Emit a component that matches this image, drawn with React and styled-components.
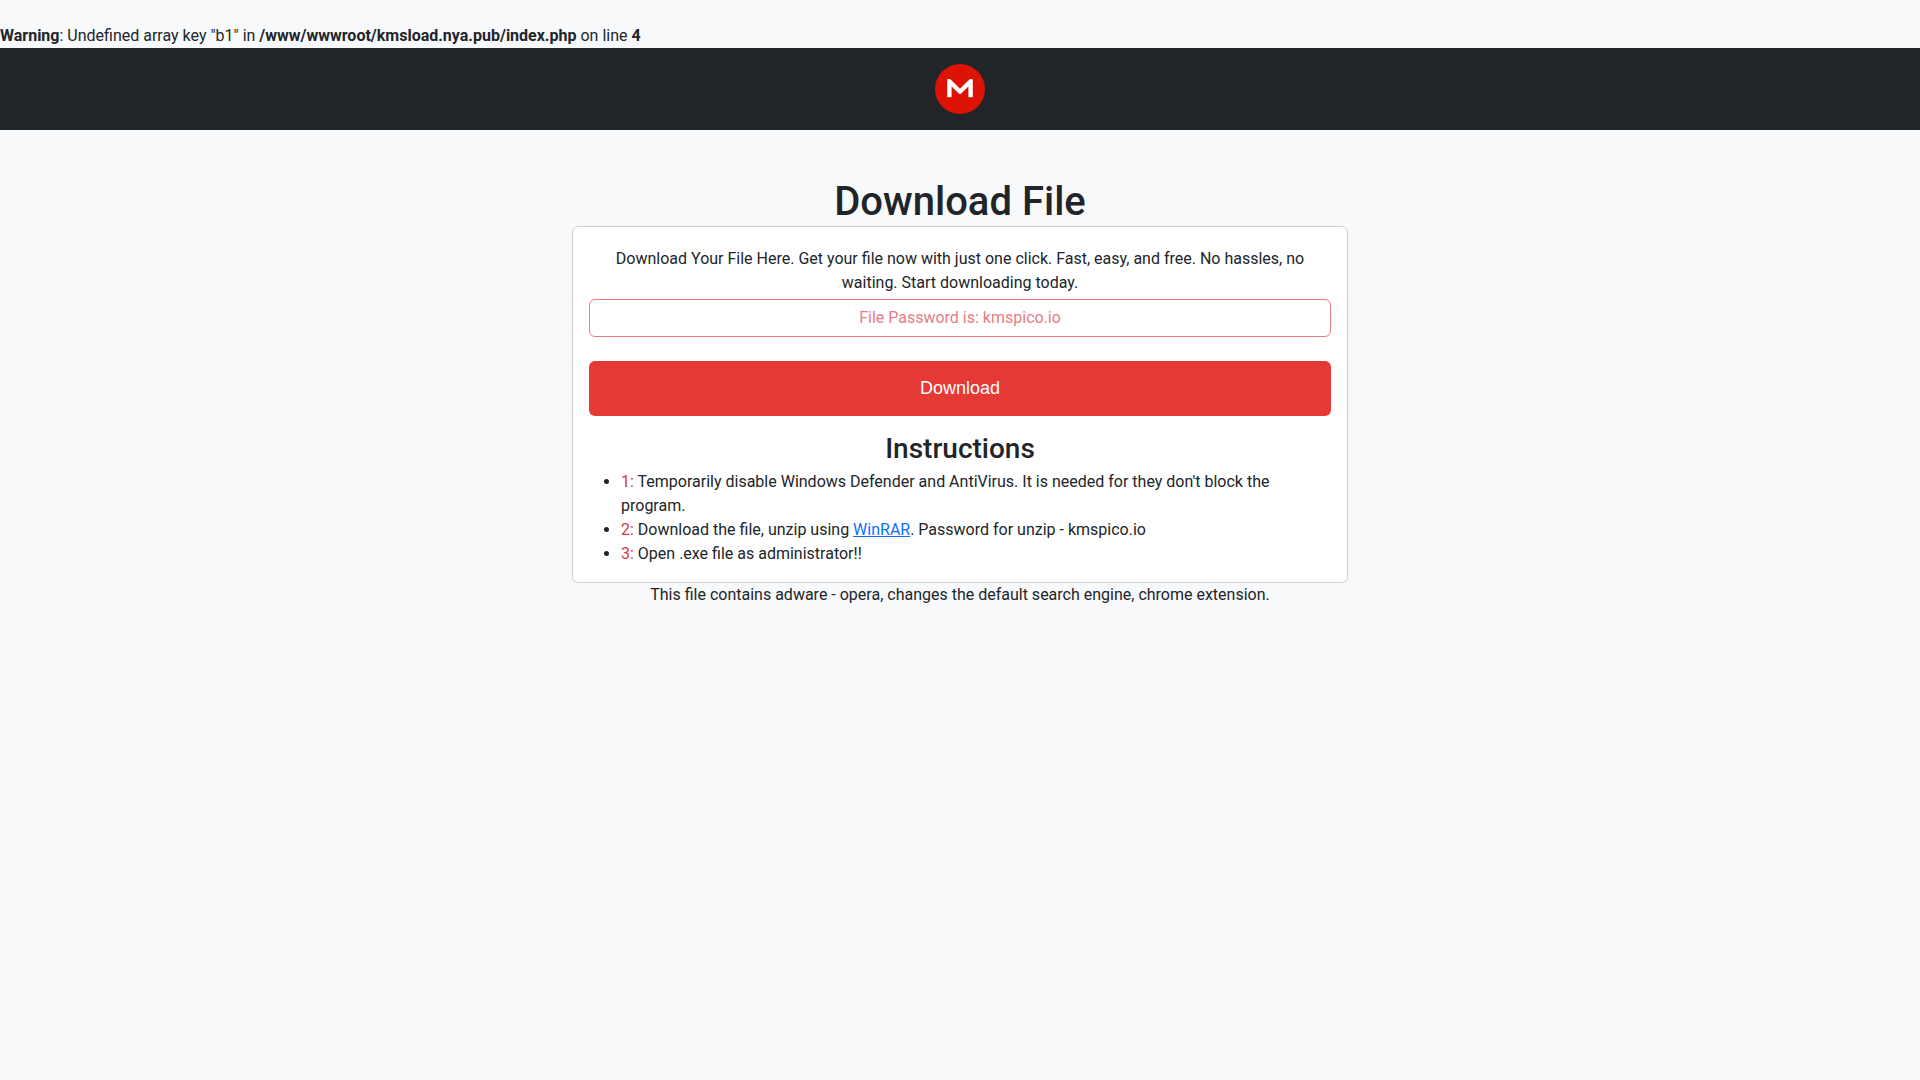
import React from 'react'
import styled, { createGlobalStyle } from 'styled-components'

const GlobalStyle = createGlobalStyle`
*{
    box-sizing:border-box;
}
body{
    margin:0;
    background-color:#f8f9fb;
    color:#212529;
    font-family:Roboto, "Liberation Sans", sans-serif;
    font-size:16px;
    line-height:24px;
}
`;

const Warning = styled.div`
padding-top:24px;
`;
const Navbar = styled.nav`
display:flex;
justify-content:center;
padding:16px;
background-color:#212529;
`;
const LogoLink = styled.a`
display:flex;
`;
const Container = styled.main`
max-width:800px;
margin:0 auto;
padding:48px 12px;
text-align:center;
`;
const Title = styled.h1`
margin:0;
font-size:40px;
font-weight:500;
line-height:48px;
`;
const Card = styled.div`
padding:16px;
background-color:white;
border:1px solid #cecece;
border-radius:6px;
`;
const Text = styled.p`
margin:4px 0;
`;
const Password = styled.button`
display:block;
width:100%;
margin-bottom:24px;
padding:6px 12px;
border:1px solid #dc3545;
border-radius:6px;
background-color:transparent;
color:#dc3545;
font:inherit;
opacity:0.65;
`;
const Download = styled.button`
display:block;
width:100%;
padding:14px;
border:none;
border-radius:6px;
background-color:#e53935;
color:white;
font-family:"Liberation Sans", Arial, sans-serif;
font-size:18px;
line-height:27px;
cursor:pointer;
`;
const Subtitle = styled.h2`
margin:16px 0 4px;
font-size:28px;
font-weight:500;
line-height:34px;
`;
const List = styled.ul`
margin:0;
padding-left:32px;
text-align:left;
`;
const Step = styled.span`
color:#dc3545;
`;
const Link = styled.a`
color:#0d6efd;
`;
const Notice = styled.p`
margin:0;
`;

const Logo = () => {
  return (
    <svg width="50" height="50" viewBox="0 0 50 50" aria-hidden="true">
      <circle cx="25" cy="25" r="25" fill="#dd1405" />
      <path
        d="M12.200 16q0-.9.900-.9h1.700q.5 0 .9.400L25 24.700l9.300-9.200q.4-.4.900-.4h1.700q.9 0 .9.900v16.400q0 .9-.9.900h-2.600q-.9 0-.9-.9v-9.900l-7.500 7.200q-.9.800-1.800 0l-7.500-7.200v9.900q0 .9-.9.900h-2.600q-.9 0-.9-.9z"
        fill="#fff"
      />
    </svg>
  )
}

const App = () => {
  return (
    <>
      <GlobalStyle />
      <Warning>
        <b>Warning</b>: Undefined array key "b1" in <b>/www/wwwroot/kmsload.nya.pub/index.php</b> on line <b>4</b>
      </Warning>
      <Navbar>
        <LogoLink href="#" aria-label="Home">
          <Logo />
        </LogoLink>
      </Navbar>
      <Container>
        <Title>Download File</Title>
        <Card>
          <Text>
            Download Your File Here. Get your file now with just one click. Fast, easy, and free. No hassles, no
            waiting. Start downloading today.
          </Text>
          <Password type="button" disabled>File Password is: kmspico.io</Password>
          <Download type="button">Download</Download>
          <Subtitle>Instructions</Subtitle>
          <List>
            <li><Step>1:</Step> Temporarily disable Windows Defender and AntiVirus. It is needed for they don't block the program.</li>
            <li><Step>2:</Step> Download the file, unzip using <Link href="#">WinRAR</Link>. Password for unzip - kmspico.io</li>
            <li><Step>3:</Step> Open .exe file as administrator!!</li>
          </List>
        </Card>
        <Notice>This file contains adware - opera, changes the default search engine, chrome extension.</Notice>
      </Container>
    </>
  )
}

export default App
